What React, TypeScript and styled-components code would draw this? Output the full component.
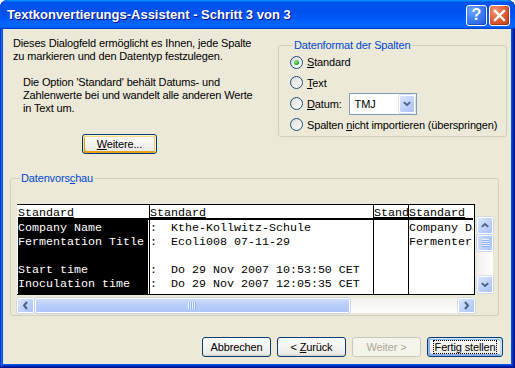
import React from "react";
import styled, { createGlobalStyle } from "styled-components";

const UI = `"Liberation Sans", Arial, sans-serif`;
const MONO = `"Liberation Mono", "Courier New", monospace`;

const Global = createGlobalStyle`
  html, body { margin: 0; padding: 0; background: #ffffff; }
  body { font-family: ${UI}; font-size: 11px; letter-spacing: -0.15px; color: #000; }
  * { box-sizing: border-box; }
`;

const Window = styled.div`
  width: 515px;
  height: 368px;
  display: flex;
  flex-direction: column;
  background: #0055e5;
  border-radius: 8px 8px 0 0;
  overflow: hidden;
  box-shadow: inset -1px -1px #00138c, inset 1px 1px #0831d9, inset -2px -2px #001ea0,
    inset 2px 2px #166aee, inset -3px -3px #003bda, inset 3px 3px #0855dd;
`;

const TitleBar = styled.div`
  height: 29px;
  flex: none;
  display: flex;
  align-items: center;
  padding: 0 5px 0 7px;
  background: linear-gradient(180deg, #0997ff, #0053ee 8%, #0050ee 40%, #0066ff 88%, #0066ff 93%, #005bff 95%, #003dd7 96%, #003dd7);
`;

const Title = styled.div`
  flex: 1;
  color: #fff;
  font-family: "Liberation Sans", Arial, sans-serif;
  font-weight: bold;
  font-size: 13px;
  letter-spacing: 0;
  text-shadow: 1px 1px #0f1089;
  white-space: nowrap;
`;

const CapButtons = styled.div`
  display: flex;
  gap: 2px;
  margin-top: 1px;
`;

const CapButton = styled.div<{ $kind: "help" | "close" }>`
  width: 21px;
  height: 21px;
  border: 1px solid #fff;
  border-radius: 3px;
  display: flex;
  align-items: center;
  justify-content: center;
  color: #fff;
  font-family: "Liberation Sans", Arial, sans-serif;
  font-weight: bold;
  font-size: 16px;
  letter-spacing: 0;
  background: ${(p) =>
    p.$kind === "help"
      ? "radial-gradient(circle at 30% 25%, #6ea6ff 0%, #3d7ff5 45%, #2357d6 100%)"
      : "radial-gradient(circle at 30% 25%, #f09a7c 0%, #e2603a 45%, #c23b17 100%)"};
  box-shadow: inset -1px -1px rgba(0, 0, 40, 0.25);
`;

const Client = styled.div`
  flex: 1;
  margin: 0 4px 4px 3px;
  background: #ece9d8;
  display: flex;
  flex-direction: column;
`;

const TopRow = styled.div`
  height: 143px;
  flex: none;
  display: flex;
  align-items: flex-start;
`;

const LeftCol = styled.div`
  flex: 1;
  padding: 8px 0 0 10px;
  display: flex;
  flex-direction: column;
  align-items: flex-start;
`;

const Para = styled.p<{ $indent?: number; $gap?: number }>`
  margin: ${(p) => p.$gap ?? 0}px 0 0 ${(p) => p.$indent ?? 0}px;
  line-height: 13px;
  white-space: pre;
`;

const Group = styled.fieldset`
  margin: 0;
  border: 1px solid #d0d0bf;
  border-radius: 3px;
  min-width: 0;
`;

const Legend = styled.legend`
  color: #0046d5;
  padding: 0 1px;
  margin-left: 3px;
  line-height: 13px;
  font-size: 11px;
`;

const FormatGroup = styled(Group)`
  width: 229px;
  margin: 10px 4px 0 0;
  padding: 0 0 1px 11px;
`;

const RadioRow = styled.div<{ $h: number }>`
  height: ${(p) => p.$h}px;
  display: flex;
  align-items: center;
  gap: 4px;
  white-space: nowrap;
`;

const RadioCircle = styled.span`
  width: 13px;
  height: 13px;
  flex: none;
  border-radius: 50%;
  border: 1px solid #1c5180;
  background: linear-gradient(135deg, #dcdcd7, #ffffff);
  display: flex;
  align-items: center;
  justify-content: center;
`;

const RadioDot = styled.span`
  width: 5px;
  height: 5px;
  border-radius: 50%;
  background: radial-gradient(circle at 35% 35%, #8ef08a, #21a121 70%, #1a8a1a);
`;

const Select = styled.div`
  width: 68px;
  height: 22px;
  margin-left: 3px;
  border: 1px solid #7f9db9;
  background: #fff;
  display: flex;
  align-items: center;
  padding: 1px;
`;

const SelectText = styled.span`
  flex: 1;
  padding-left: 4px;
`;

const ArrowBtn = styled.span<{ $w: number; $h: number }>`
  width: ${(p) => p.$w}px;
  height: ${(p) => p.$h}px;
  flex: none;
  display: flex;
  align-items: center;
  justify-content: center;
  border: 1px solid #fff;
  border-radius: 2px;
  background: linear-gradient(135deg, #dbe6fe, #c1d3fb 50%, #aac3f7);
  box-shadow: 0 0 0 0.5px #b5c8f3;
`;

const XPButton = styled.button<{ $w: number; $variant?: "hot" | "default" | "disabled" }>`
  width: ${(p) => p.$w}px;
  height: 20px;
  padding: 0;
  font-family: ${UI};
  font-size: 11px;
  letter-spacing: -0.15px;
  color: ${(p) => (p.$variant === "disabled" ? "#aca899" : "#000")};
  border: 1px solid ${(p) => (p.$variant === "disabled" ? "#c9c7ba" : "#003c74")};
  border-radius: 3px;
  background: ${(p) =>
    p.$variant === "disabled" ? "#f5f4ea" : "linear-gradient(180deg, #ffffff, #ecebe6 86%, #d6d0c5)"};
  box-shadow: ${(p) =>
    p.$variant === "hot"
      ? "inset -1px 1px #fff0cf, inset 1px 2px #fdd889, inset -2px 2px #fbc761, inset 2px -2px #e5a01a"
      : p.$variant === "default"
      ? "inset -1px 1px #cee7ff, inset 1px 2px #98b8ea, inset -2px 2px #bcd4f6, inset 1px -1px #89ade4, inset 2px -2px #89ade4"
      : "none"};
  display: flex;
  align-items: center;
  justify-content: center;
`;

const FocusRect = styled.span`
  border: 1px dotted #000;
  padding: 0 1px;
  line-height: 12px;
`;

const WeitereWrap = styled.div`
  margin: 19px 0 0 69px;
`;

const PreviewGroup = styled(Group)`
  margin: 0 12px 0 7px;
  padding: 19px 5px 2px 6px;
`;

const PreviewRow = styled.div`
  display: flex;
  align-items: flex-start;
  gap: 2px;
`;

const TableBox = styled.div`
  width: 458px;
  height: 91px;
  border: 1px solid #000;
  border-left: none;
  padding-left: 1px;
  background: #fff;
  display: flex;
  font-family: ${MONO};
  font-size: 11.667px;
  letter-spacing: 0;
  overflow: hidden;
`;

const Col = styled.div<{ $w: number; $last?: boolean }>`
  width: ${(p) => p.$w + (p.$last ? 0 : 1)}px;
  flex: none;
  display: flex;
  flex-direction: column;
  border-right: ${(p) => (p.$last ? "none" : "1px solid #000")};
  overflow: hidden;
`;

const HeadCell = styled.div`
  height: 15px;
  padding-top: 2px;
  border-bottom: 2px solid #000;
  line-height: 13px;
  white-space: pre;
  overflow: hidden;
  text-decoration: underline;
  text-underline-offset: 1px;
`;

const Body = styled.div<{ $selected?: boolean }>`
  flex: 1;
  padding-top: 1px;
  margin-right: ${(p) => (p.$selected ? 1 : 0)}px;
  background: ${(p) => (p.$selected ? "#000" : "#fff")};
  color: ${(p) => (p.$selected ? "#fff" : "#000")};
`;

const Cell = styled.div`
  height: 14px;
  line-height: 14px;
  white-space: pre;
  overflow: hidden;
`;

const VScroll = styled.div`
  width: 16px;
  height: 76px;
  margin-top: 13px;
  display: flex;
  flex-direction: column;
  background: linear-gradient(90deg, #f3f1ec, #fefefe);
`;

const HScroll = styled.div`
  width: 458px;
  height: 15px;
  margin-top: 3px;
  display: flex;
  background: linear-gradient(180deg, #f3f1ec, #fefefe);
`;

const Track = styled.div`
  flex: 1;
`;

const Thumb = styled.div<{ $dir: "h" | "v"; $size: number }>`
  ${(p) => (p.$dir === "h" ? `width: ${p.$size}px; margin-left: 1px;` : `height: ${p.$size}px; margin-top: 1px;`)}
  flex: none;
  border: 1px solid #fff;
  border-radius: 2px;
  background: ${(p) =>
    p.$dir === "h"
      ? "linear-gradient(180deg, #cfdcfd, #b8cdfb 50%, #aec6fa)"
      : "linear-gradient(90deg, #cfdcfd, #b8cdfb 50%, #aec6fa)"};
  box-shadow: 0 0 0 0.5px #9fb9f3;
  display: flex;
  align-items: center;
  justify-content: center;
`;

const ButtonRow = styled.div`
  margin: 21px 8px 0 0;
  display: flex;
  justify-content: flex-end;
  gap: 6px;
`;

const Chevron = ({ dir }: { dir: "left" | "right" | "up" | "down" }) => {
  const pts = {
    left: "9,4 6,7.5 9,11",
    right: "6,4 9,7.5 6,11",
    up: "4,9 7.5,6 11,9",
    down: "4,6 7.5,9 11,6",
  }[dir];
  return (
    <svg width="15" height="15" viewBox="0 0 15 15">
      <polyline points={pts} fill="none" stroke="#4d6185" strokeWidth="2" />
    </svg>
  );
};

const Grip = ({ dir }: { dir: "h" | "v" }) =>
  dir === "h" ? (
    <svg width="9" height="7" viewBox="0 0 9 7">
      {[0, 2, 4, 6].map((x) => (
        <g key={x}>
          <rect x={x} y="0" width="1" height="7" fill="#eef4fe" />
          <rect x={x + 1} y="0" width="1" height="7" fill="#8cb0f8" />
        </g>
      ))}
    </svg>
  ) : (
    <svg width="7" height="9" viewBox="0 0 7 9">
      {[0, 2, 4, 6].map((y) => (
        <g key={y}>
          <rect x="0" y={y} width="7" height="1" fill="#eef4fe" />
          <rect x="0" y={y + 1} width="7" height="1" fill="#8cb0f8" />
        </g>
      ))}
    </svg>
  );

const columns = [
  {
    w: 131,
    head: "Standard",
    selected: true,
    rows: ["Company Name", "Fermentation Title", "", "Start time", "Inoculation time"],
  },
  {
    w: 223,
    head: "Standard",
    rows: [
      ":  Kthe-Kollwitz-Schule",
      ":  Ecoli008 07-11-29",
      "",
      ":  Do 29 Nov 2007 10:53:50 CET",
      ":  Do 29 Nov 2007 12:05:35 CET",
    ],
  },
  { w: 34, head: "Stand", rows: ["", "", "", "", ""] },
  { w: 64, head: "Standard", last: true, rows: ["Company Da", "Fermenter", "", "", ""] },
];

export default function App() {
  return (
    <>
      <Global />
      <Window>
        <TitleBar>
          <Title>Textkonvertierungs-Assistent - Schritt 3 von 3</Title>
          <CapButtons>
            <CapButton $kind="help">?</CapButton>
            <CapButton $kind="close">
              <svg width="13" height="13" viewBox="0 0 13 13">
                <path d="M2 2 L11 11 M11 2 L2 11" stroke="#fff" strokeWidth="2.4" strokeLinecap="square" />
              </svg>
            </CapButton>
          </CapButtons>
        </TitleBar>
        <Client>
          <TopRow>
            <LeftCol>
              <Para>
                {"Dieses Dialogfeld ermöglicht es Ihnen, jede Spalte\nzu markieren und den Datentyp festzulegen."}
              </Para>
              <Para $indent={10} $gap={13}>
                {"Die Option 'Standard' behält Datums- und\nZahlenwerte bei und wandelt alle anderen Werte\nin Text um."}
              </Para>
              <WeitereWrap>
                <XPButton $w={75} $variant="hot">
                  <span>
                    <u>W</u>eitere...
                  </span>
                </XPButton>
              </WeitereWrap>
            </LeftCol>
            <FormatGroup>
              <Legend>Datenformat der Spalten</Legend>
              <RadioRow $h={20}>
                <RadioCircle>
                  <RadioDot />
                </RadioCircle>
                <span>
                  <u>S</u>tandard
                </span>
              </RadioRow>
              <RadioRow $h={21}>
                <RadioCircle />
                <span>
                  <u>T</u>ext
                </span>
              </RadioRow>
              <RadioRow $h={21}>
                <RadioCircle />
                <span>
                  <u>D</u>atum:
                </span>
                <Select>
                  <SelectText>TMJ</SelectText>
                  <ArrowBtn $w={16} $h={18}>
                    <Chevron dir="down" />
                  </ArrowBtn>
                </Select>
              </RadioRow>
              <RadioRow $h={21}>
                <RadioCircle />
                <span>
                  Spalten <u>n</u>icht importieren (überspringen)
                </span>
              </RadioRow>
            </FormatGroup>
          </TopRow>
          <PreviewGroup>
            <Legend>
              Datenvors<u>c</u>hau
            </Legend>
            <PreviewRow>
              <TableBox>
                {columns.map((c, i) => (
                  <Col key={i} $w={c.w} $last={c.last}>
                    <HeadCell>{c.head}</HeadCell>
                    <Body $selected={c.selected}>
                      {c.rows.map((r, j) => (
                        <Cell key={j}>{r}</Cell>
                      ))}
                    </Body>
                  </Col>
                ))}
              </TableBox>
              <VScroll>
                <ArrowBtn $w={16} $h={17}>
                  <Chevron dir="up" />
                </ArrowBtn>
                <Thumb $dir="v" $size={16}>
                  <Grip dir="v" />
                </Thumb>
                <Track />
                <ArrowBtn $w={16} $h={17}>
                  <Chevron dir="down" />
                </ArrowBtn>
              </VScroll>
            </PreviewRow>
            <HScroll>
              <ArrowBtn $w={17} $h={15}>
                <Chevron dir="left" />
              </ArrowBtn>
              <Thumb $dir="h" $size={315}>
                <Grip dir="h" />
              </Thumb>
              <Track />
              <ArrowBtn $w={17} $h={15}>
                <Chevron dir="right" />
              </ArrowBtn>
            </HScroll>
          </PreviewGroup>
          <ButtonRow>
            <XPButton $w={69}>Abbrechen</XPButton>
            <XPButton $w={69}>
              <span>
                &lt; <u>Z</u>urück
              </span>
            </XPButton>
            <XPButton $w={69} $variant="disabled">
              Weiter &gt;
            </XPButton>
            <XPButton $w={76} $variant="default">
              <FocusRect>Fertig stellen</FocusRect>
            </XPButton>
          </ButtonRow>
        </Client>
      </Window>
    </>
  );
}
